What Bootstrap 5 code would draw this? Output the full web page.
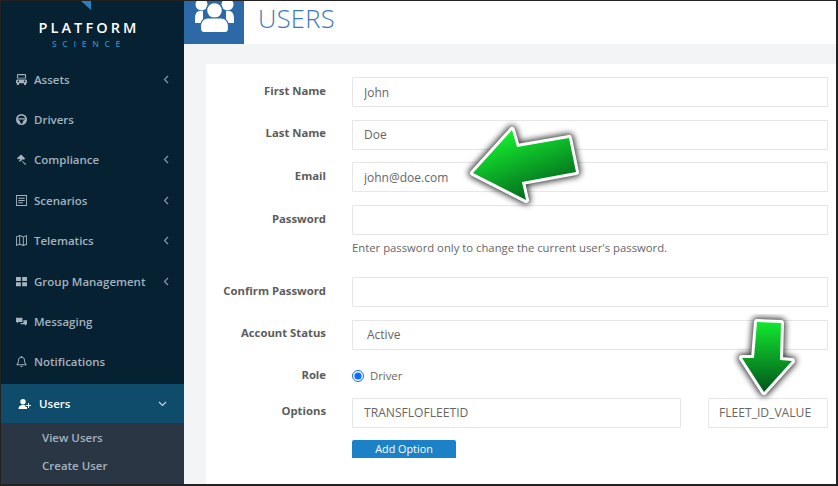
<!DOCTYPE html>
<html lang="en">
<head>
<meta charset="utf-8">
<title>Users</title>
<link href="https://cdn.jsdelivr.net/npm/bootstrap@5.3.0/dist/css/bootstrap.min.css" rel="stylesheet">
<style>
html,body{height:100%;margin:0;overflow:hidden}
body{font-family:"Open Sans","Liberation Sans",sans-serif;background:#f3f4f6;color:#555}
.shell{width:838px;height:486px;border:solid #222;border-width:1px 2px 2px 1px;position:relative}
.side{width:183px;flex:none;background:#062132;height:100%;overflow:hidden}
.logo-box{height:58px;padding-top:20px;text-align:center;position:relative;flex:none}
.logo-mark{position:absolute;left:80px;top:0;width:10px;height:9px}
.logo-a{color:#fff;font-size:14.5px;font-weight:600;letter-spacing:3.1px;line-height:13px;padding-right:7px}
.logo-b{color:#2d86b8;font-size:8.500px;font-weight:600;letter-spacing:5.7px;line-height:9px;margin-top:5px;padding-right:7px}
.menu-row{height:40.4px;flex:none;padding-left:15px;padding-right:15px;color:#a4b3be;font-size:11.5px;font-weight:600;gap:7px}
.menu-row svg.ic{width:11px;height:11px;flex:none;fill:currentColor}
.menu-row .chev{width:6px;height:9px;flex:none;stroke:#8b99a4;fill:none;stroke-width:1.200}
.menu-row.menu-on{background:#0f4b6b;color:#fff;height:39px;padding-left:17px;gap:8px;padding-right:17px;margin-top:2px}
.menu-row.menu-on svg.ic{width:13px;height:12px}
.menu-row.menu-on .chev{width:9px;height:6px;stroke:#c9d4da}
.sub-box{background:#2a3644;height:70px;flex:none}
.sub-row{height:28.5px;padding-left:41px;color:#a4b3be;font-size:11.5px;font-weight:600}
.main-area{min-width:0;height:100%}
.top-head{height:43px;background:#fff}
.head-ic{width:60px;background:#2c69a6;overflow:hidden}
.head-ic svg{width:40px;height:32px;fill:#fff;display:block;margin-left:11px}
.head-title{color:#3d79b8;font-size:25.5px;font-weight:300;line-height:35px;padding-left:14px;letter-spacing:.3px}
.panel{background:#fff;margin:20px 0 0 22px;height:420px;padding-top:13px}
.lab{width:120px;text-align:right;font-size:11.3px;font-weight:700;color:#5c5c5c;flex:none;margin-right:26px;margin-top:-2px}
.fld{width:476px;height:30px;border:1px solid #e6e6e6;background:#fff;font-size:12px;color:#666;padding:0 11px;line-height:28px;border-radius:1px;margin:0;box-shadow:none}
.fld-sel{padding-left:14px}
.frow{margin-bottom:12.67px}
.hint{font-size:11.3px;color:#666;margin:5px 0 0 146px;line-height:15px;height:37px}
.radio-dot{width:12px;height:12px;margin:0 6px 0 0;flex:none;accent-color:#0d6efd}
.role-row{height:28px;margin-bottom:7.33px;font-size:11.3px;color:#666}
.fld-opt{width:329px;padding:0 11px;font-size:12.1px}
.fld-val{width:120px;margin-left:27px;padding:0 10px;font-size:12.1px}
.add-btn{width:104px;height:18px;margin:1px 0 0 146px;padding:0;background:#1c81c6;border:0;border-radius:2px 2px 0 0;color:#fff;font-size:10.8px;line-height:18px}
.arrow-a{position:absolute;left:461px;top:117px;width:128px;height:96px}
.arrow-b{position:absolute;left:730px;top:313px;width:72px;height:90px}
</style>
</head>
<body>
<div class="shell d-flex">
  <nav class="side d-flex flex-column">
    <div class="logo-box">
      <svg class="logo-mark" viewBox="0 0 10 9"><path d="M0 0H10V9Z" fill="#2c7fc0"/></svg>
      <div class="logo-a">PLATFORM</div>
      <div class="logo-b">SCIENCE</div>
    </div>
    <div class="d-flex align-items-center menu-row">
      <svg class="ic" viewBox="0 0 12 12"><path fill-rule="evenodd" d="M2.500 0h7A1.500 1.500 0 0 1 11 1.500V5H1V1.500A1.500 1.500 0 0 1 2.500 0zM2.200 1.300V4h7.600V1.300zM1.500 6h9A1.500 1.500 0 0 1 12 7.500V10h-1v2H8.800v-2H3.200v2H1v-2H0V7.500A1.500 1.500 0 0 1 1.500 6zM2.500 7.200a.9.900 0 1 0 0 1.800.9.900 0 0 0 0-1.800zM9.500 7.200a.9.900 0 1 0 0 1.800.9.900 0 0 0 0-1.800z"/></svg>
      <span class="flex-grow-1">Assets</span>
      <svg class="chev" viewBox="0 0 6 9"><path d="M5 1 1.500 4.500 5 8"/></svg>
    </div>
    <div class="d-flex align-items-center menu-row">
      <svg class="ic" viewBox="0 0 12 12"><path fill-rule="evenodd" d="M6 0a6 6 0 1 1 0 12A6 6 0 0 1 6 0zm0 1.500A4.500 4.500 0 0 0 1.800 4.500h8.400A4.500 4.500 0 0 0 6 1.500zM1.600 6.200c1.800.2 3 1.400 3.200 4 .4.200.8.300 1.200.300s.8-.1 1.200-.3c.2-2.600 1.400-3.800 3.200-4V6H1.600z"/></svg>
      <span class="flex-grow-1">Drivers</span>
    </div>
    <div class="d-flex align-items-center menu-row">
      <svg class="ic" viewBox="0 0 12 12"><path d="M5.500.5 10 5 8.500 6.500 7.500 5.500 6 7l5 4-1 1-4.500-5L4 8.500 3 7.500 4.500 6 3.500 5 2.500 6 1 4.500Z"/></svg>
      <span class="flex-grow-1">Compliance</span>
      <svg class="chev" viewBox="0 0 6 9"><path d="M5 1 1.500 4.500 5 8"/></svg>
    </div>
    <div class="d-flex align-items-center menu-row">
      <svg class="ic" viewBox="0 0 12 12"><path fill-rule="evenodd" d="M0 0h12v12H0zM1 1v10h10V1zM2.500 3h7v1h-7zM2.500 5.500h7v1h-7zM2.500 8h5v1h-5z"/></svg>
      <span class="flex-grow-1">Scenarios</span>
      <svg class="chev" viewBox="0 0 6 9"><path d="M5 1 1.500 4.500 5 8"/></svg>
    </div>
    <div class="d-flex align-items-center menu-row">
      <svg class="ic" viewBox="0 0 12 12"><path fill-rule="evenodd" d="M0 1.500 4 0l4 1.500L12 0v10.500L8 12l-4-1.500L0 12zM1 2.200v8.300l2.500-1V1.300zM4.500 1.300v8.200l3 1.200V2.500zM8.500 2.500v8.200l2.500-1V1.400z"/></svg>
      <span class="flex-grow-1">Telematics</span>
      <svg class="chev" viewBox="0 0 6 9"><path d="M5 1 1.500 4.500 5 8"/></svg>
    </div>
    <div class="d-flex align-items-center menu-row">
      <svg class="ic" viewBox="0 0 12 12"><path d="M0 1h5.300v4.500H0zM6.700 1H12v4.500H6.700zM0 6.700h5.300v4.500H0zM6.700 6.700H12v4.500H6.700z"/></svg>
      <span class="flex-grow-1">Group Management</span>
      <svg class="chev" viewBox="0 0 6 9"><path d="M5 1 1.500 4.500 5 8"/></svg>
    </div>
    <div class="d-flex align-items-center menu-row">
      <svg class="ic" viewBox="0 0 12 12"><path d="M0 2h7v4.500H3L1 8V6.500H0zM8 4.500h4V9h-1v1.500L9 9H5V7.500h3z"/></svg>
      <span class="flex-grow-1">Messaging</span>
    </div>
    <div class="d-flex align-items-center menu-row">
      <svg class="ic" viewBox="0 0 12 12"><path fill-rule="evenodd" d="M6 0a1 1 0 0 1 1 1c2 .5 2.800 2 2.800 4 0 2 .7 3.200 1.700 4.200V10H.5v-.8c1-1 1.700-2.200 1.700-4.200s.8-3.500 2.800-4a1 1 0 0 1 1-1zM6 2C4 2 3.200 3.300 3.200 5c0 1.700-.4 3-1.200 4h8c-.8-1-1.200-2.300-1.200-4 0-1.700-.8-3-2.800-3zM4.500 10.800h3A1.500 1.500 0 0 1 6 12a1.500 1.500 0 0 1-1.500-1.200z"/></svg>
      <span class="flex-grow-1">Notifications</span>
    </div>
    <div class="d-flex align-items-center menu-row menu-on">
      <svg class="ic" viewBox="0 0 13 12"><path d="M5 1a2.700 2.700 0 1 1 0 5.400A2.700 2.700 0 0 1 5 1zM.5 11c0-2.800 1.500-4 4.500-4 1 0 1.800.1 2.500.5v1.500H9V11zM10 5h1v2h2v1h-2v2h-1V8H8V7h2z"/></svg>
      <span class="flex-grow-1">Users</span>
      <svg class="chev" viewBox="0 0 9 6"><path d="M1 1 4.500 4.500 8 1"/></svg>
    </div>
    <div class="sub-box">
      <div class="d-flex align-items-center sub-row">View Users</div>
      <div class="d-flex align-items-center sub-row">Create User</div>
    </div>
  </nav>
  <main class="main-area flex-grow-1">
    <header class="d-flex top-head">
      <div class="head-ic">
        <svg viewBox="0 0 40 32"><circle cx="6.500" cy="3.500" r="6"/><circle cx="32.500" cy="3.500" r="6"/><path d="M0 18c0-5 1.500-8 5-8h3v12H1c-.6 0-1-.4-1-1zM39 18c0-5-1.500-8-5-8h-3v12h7c.6 0 1-.4 1-1z"/><circle cx="19.500" cy="9.500" r="8" stroke="#2c69a6" stroke-width="1.500"/><path d="M5.500 28v-2c0-6 3-8.500 7-9h14c4 .5 7 3 7 9v2c0 2-1.500 3.500-3.500 3.500H9C7 31.500 5.500 30 5.500 28z" stroke="#2c69a6" stroke-width="1.200"/></svg>
      </div>
      <div class="head-title">USERS</div>
    </header>
    <form class="panel">
      <div class="d-flex align-items-center frow"><label class="lab" for="f1">First Name</label><input id="f1" class="form-control fld" value="John"></div>
      <div class="d-flex align-items-center frow"><label class="lab" for="f2">Last Name</label><input id="f2" class="form-control fld" value="Doe"></div>
      <div class="d-flex align-items-center frow"><label class="lab" for="f3">Email</label><input id="f3" class="form-control fld" value="john@doe.com"></div>
      <div class="d-flex align-items-center"><label class="lab" for="f4">Password</label><input id="f4" class="form-control fld" type="text"></div>
      <p class="hint">Enter password only to change the current user's password.</p>
      <div class="d-flex align-items-center frow"><label class="lab" for="f5">Confirm Password</label><input id="f5" class="form-control fld" type="text"></div>
      <div class="d-flex align-items-center frow"><label class="lab" for="f6">Account Status</label><input id="f6" class="form-control fld fld-sel" value="Active"></div>
      <div class="d-flex align-items-center role-row"><span class="lab">Role</span><input class="radio-dot" type="radio" checked aria-label="Driver"><span>Driver</span></div>
      <div class="d-flex align-items-center frow"><label class="lab" for="f7">Options</label><input id="f7" class="form-control fld fld-opt" value="TRANSFLOFLEETID"><input class="form-control fld fld-val" value="FLEET_ID_VALUE" aria-label="Value"></div>
      <button type="button" class="btn add-btn d-block">Add Option</button>
    </form>
  </main>
  <svg class="arrow-a" viewBox="0 0 128 96"><defs><linearGradient id="ga" x1="0.3" y1="0.1" x2="0.8" y2="1"><stop offset="0" stop-color="#13e82e"/><stop offset="1" stop-color="#01561c"/></linearGradient><filter id="sa" x="-20%" y="-20%" width="140%" height="140%"><feGaussianBlur stdDeviation="3"/></filter></defs><path d="M11 55 50 12 55 29 107 20 114 54 60 64 64 82Z" fill="#000" opacity=".8" filter="url(#sa)" stroke="#000" stroke-width="9" stroke-linejoin="round"/><path d="M11 55 50 12 55 29 107 20 114 54 60 64 64 82Z" fill="url(#ga)" stroke="#fff" stroke-width="6" stroke-linejoin="round" paint-order="stroke"/></svg>
  <svg class="arrow-b" viewBox="0 0 72 90"><defs><linearGradient id="gb" x1="0.5" y1="0" x2="0.5" y2="1"><stop offset="0" stop-color="#13e82e"/><stop offset="1" stop-color="#01561c"/></linearGradient><filter id="sb" x="-30%" y="-20%" width="160%" height="140%"><feGaussianBlur stdDeviation="3"/></filter></defs><path d="M26 8 50 9 49 46 61 47 33 78 11 44 23 44Z" fill="#000" opacity=".8" filter="url(#sb)" stroke="#000" stroke-width="9" stroke-linejoin="round"/><path d="M26 8 50 9 49 46 61 47 33 78 11 44 23 44Z" fill="url(#gb)" stroke="#fff" stroke-width="6" stroke-linejoin="round" paint-order="stroke"/></svg>
</div>
<script src="https://cdn.jsdelivr.net/npm/bootstrap@5.3.0/dist/js/bootstrap.bundle.min.js"></script>
</body>
</html>
